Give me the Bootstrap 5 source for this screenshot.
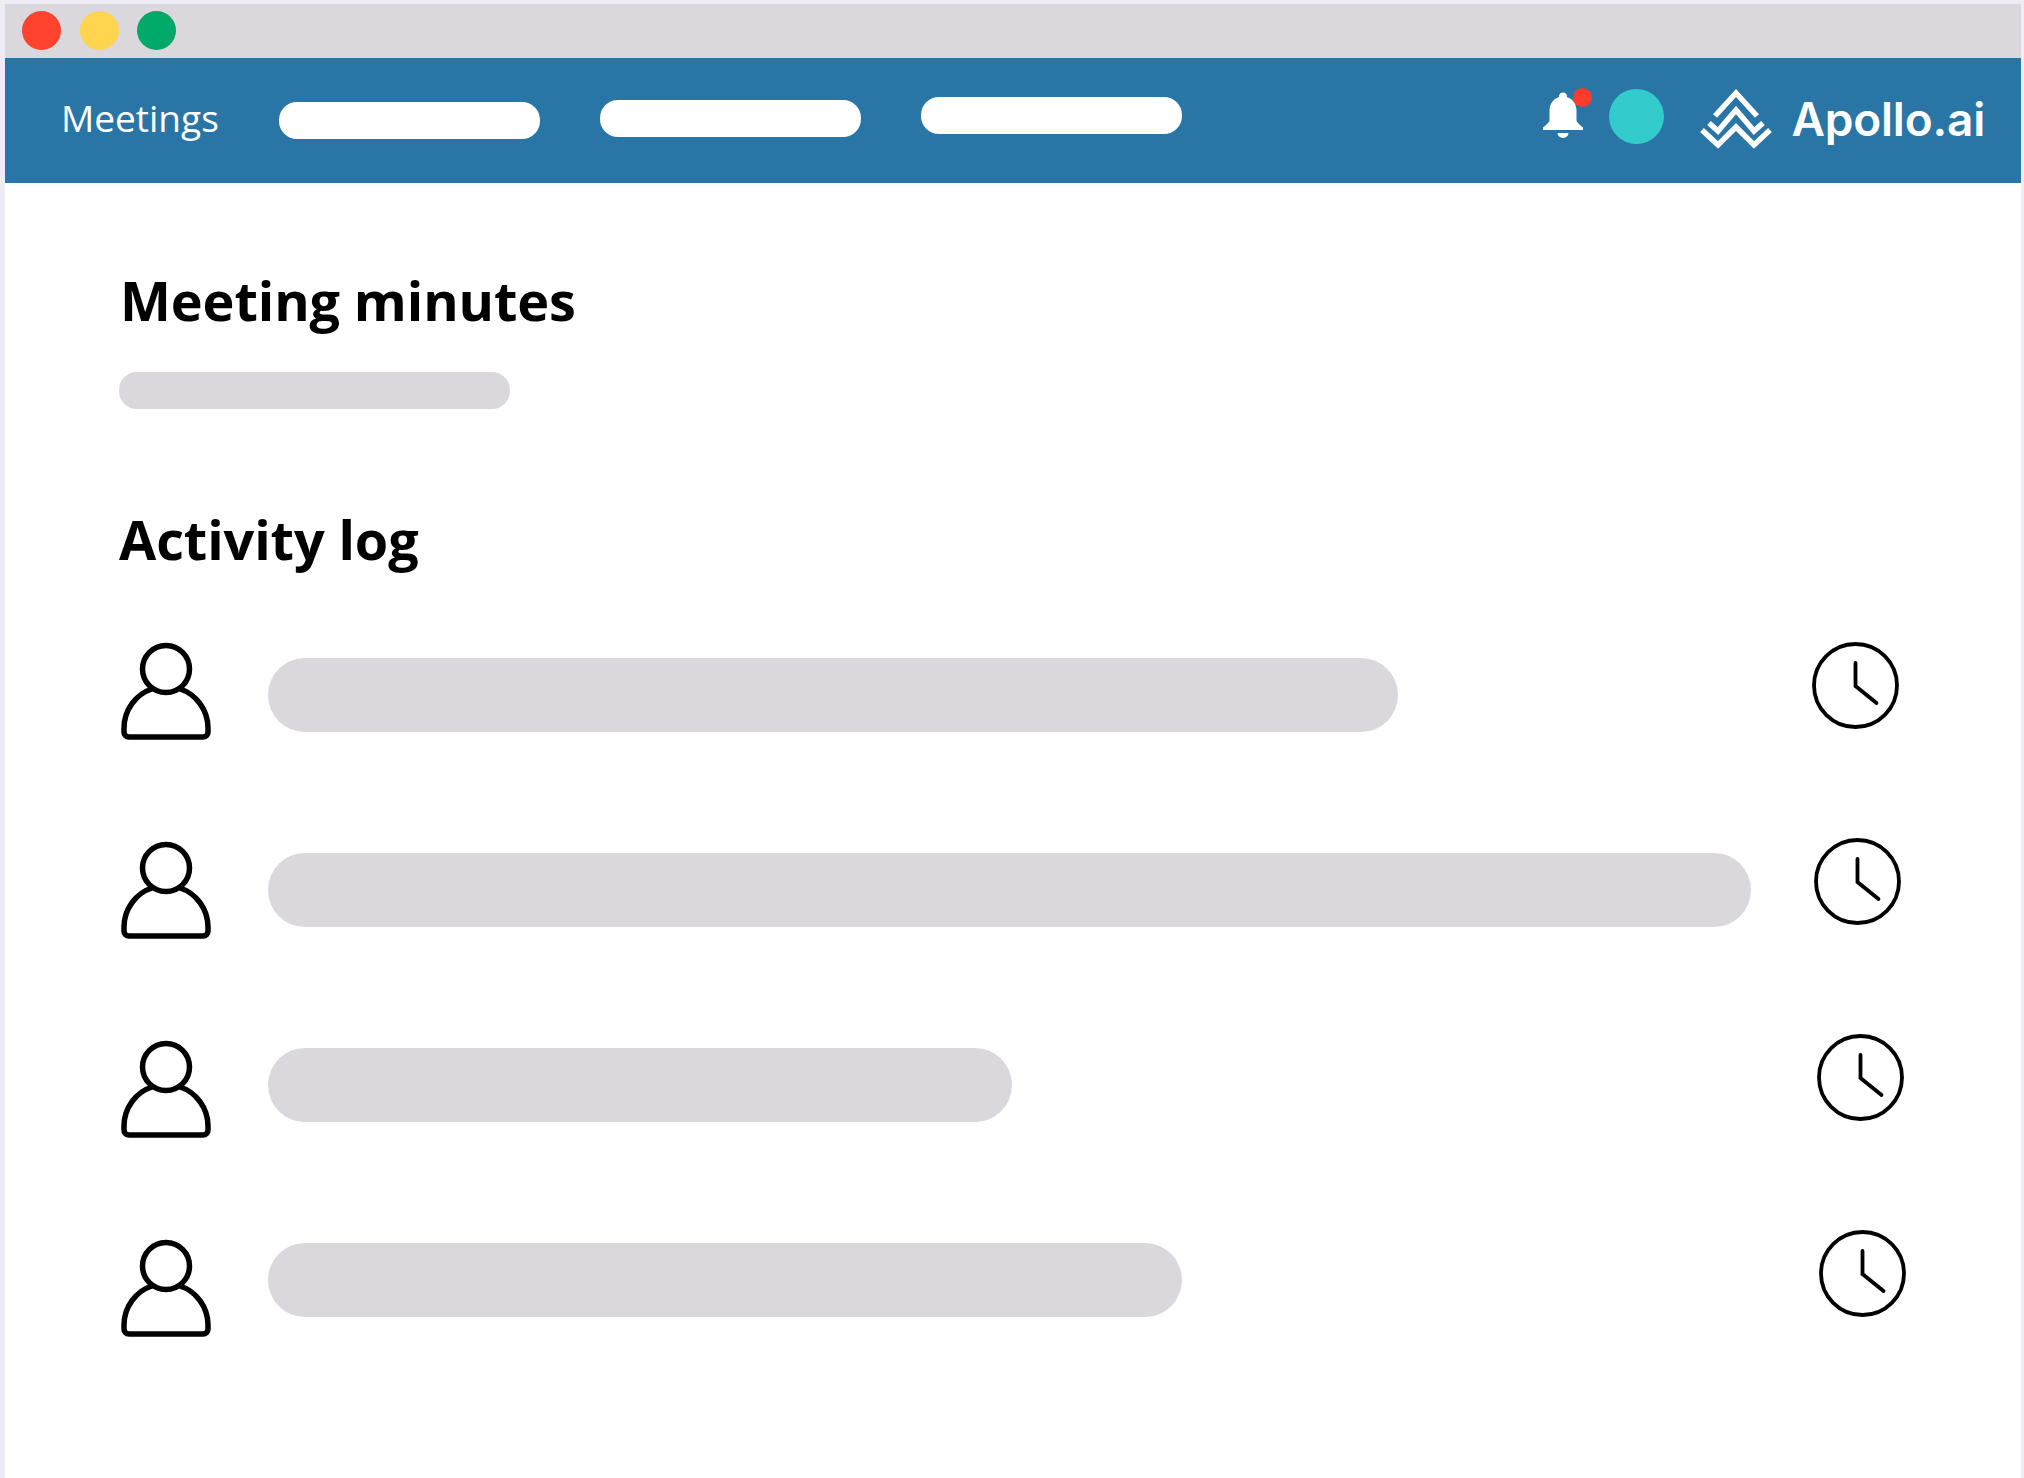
<!DOCTYPE html>
<html lang="en">
<head>
<meta charset="utf-8">
<title>Meetings</title>
<link href="https://cdn.jsdelivr.net/npm/bootstrap@5.3.0/dist/css/bootstrap.min.css" rel="stylesheet">
<style>
html,body{height:100%}
body{background:#eeedf6;padding:4px 3px 0 5px;font-family:"Open Sans","Noto Sans",sans-serif;overflow:hidden}
.app-window{background:#fff;min-height:100%}
.title-strip{background:#dad8dc;height:54px;padding-left:17px;gap:18.5px}
.tl-dot{width:39px;height:39px;border-radius:50%;margin-top:7px}
.tl-red{background:#ff432e}.tl-yellow{background:#ffd54f}.tl-green{background:#00a968}
.top-nav{background:#2975a5;height:125px;padding:0 36px 0 56px}
.nav-title{font-size:37px;font-weight:500;line-height:1;color:#fff;margin:0;padding-bottom:6px}
.nav-pill{width:261px;height:37px;background:#fff;border-radius:18px}
.np1{margin-left:60px}
.np2{margin-left:60px;margin-top:-4px}
.np3{margin-left:60px;margin-top:-10px}
.bell-wrap{position:relative;width:52px;height:48px;margin-right:14px;margin-top:-9px}
.bell-dot{position:absolute;left:30px;top:-4px;width:19px;height:19px;border-radius:50%;background:#ff3b2b}
.teal-dot{width:55px;height:55px;border-radius:50%;background:#33cccc;margin-right:35px;margin-top:-9px}
.mark-svg{margin-top:-4px}
.brand-name{font-family:Inter,"Liberation Sans",sans-serif;font-weight:600;font-size:46px;letter-spacing:-.2px;color:#fff;line-height:1;margin-left:18px;margin-top:-4px}
.page-body{padding:90px 0 0 114px}
.head-one,.head-two{font-weight:700;font-size:54px;letter-spacing:-.1px;line-height:1;color:#000;margin:0}
.head-one{padding-left:1px}
.ghost-bar{width:391px;height:37px;background:#dad8dc;border-radius:18px;margin-top:45px}
.head-two{margin-top:103px}
.log-grid{margin-top:76px}
.people-col{gap:99px;width:149px}
.person-svg{display:block;width:94px;height:100px}
.bars-col{gap:121px;padding-top:16px;width:1544px}
.log-bar{height:74px;background:#dad8dc;border-radius:37px}
.b1{width:1130px}.b2{width:1483px}.b3{width:744px}.b4{width:914px}
.clocks-col{gap:109px}
.clock-svg{display:block;width:87px;height:87px}
.c2{margin-left:2px}.c3{margin-left:5px}.c4{margin-left:7px}
</style>
</head>
<body>
<div class="app-window">
  <div class="title-strip d-flex align-items-start">
    <span class="tl-dot tl-red"></span><span class="tl-dot tl-yellow"></span><span class="tl-dot tl-green"></span>
  </div>
  <nav class="top-nav d-flex align-items-center">
    <p class="nav-title">Meetings</p>
    <span class="nav-pill np1"></span><span class="nav-pill np2"></span><span class="nav-pill np3"></span>
    <div class="ms-auto d-flex align-items-center">
      <div class="bell-wrap">
        <svg width="40" height="48" viewBox="0 0 40 48" class="d-block"><path fill="#fff" d="M20 .5a4 4 0 0 1 4 4.500c6 2 9.500 7 9.500 14v9c0 2 3 5 6.500 7.500v2.500H0v-2.500c3.500-2.500 6.500-5.500 6.500-7.500v-9c0-7 3.500-12 9.500-14a4 4 0 0 1 4-4.500ZM14.500 41h11a5.500 5 0 0 1-11 0Z"/></svg>
        <span class="bell-dot"></span>
      </div>
      <span class="teal-dot"></span>
      <div class="d-flex align-items-center">
        <svg class="mark-svg" width="74" height="62" viewBox="0 0 74 62" fill="none" stroke="#fff" stroke-width="5.500"><path d="M16 28 37 5l21 23"/><path d="m10 35 9 8 18-21 18 21 9-8"/><path d="m3 42 16 15 18-18 18 18 16-15"/></svg>
        <span class="brand-name">Apollo.ai</span>
      </div>
    </div>
  </nav>
  <main class="page-body">
    <h1 class="head-one">Meeting minutes</h1>
    <div class="ghost-bar"></div>
    <h2 class="head-two">Activity log</h2>
    <div class="log-grid d-flex align-items-start">
      <div class="people-col d-flex flex-column">
        <svg class="person-svg" viewBox="0 0 94 100" fill="none" stroke="#000" stroke-width="5.500"><circle cx="47" cy="27" r="23.500"/><path d="M33 47C17 52 5 68 5 86v4c0 3 2 5 5 5h74c3 0 5-2 5-5v-4c0-18-12-34-28-39"/></svg>
        <svg class="person-svg" viewBox="0 0 94 100" fill="none" stroke="#000" stroke-width="5.500"><circle cx="47" cy="27" r="23.500"/><path d="M33 47C17 52 5 68 5 86v4c0 3 2 5 5 5h74c3 0 5-2 5-5v-4c0-18-12-34-28-39"/></svg>
        <svg class="person-svg" viewBox="0 0 94 100" fill="none" stroke="#000" stroke-width="5.500"><circle cx="47" cy="27" r="23.500"/><path d="M33 47C17 52 5 68 5 86v4c0 3 2 5 5 5h74c3 0 5-2 5-5v-4c0-18-12-34-28-39"/></svg>
        <svg class="person-svg" viewBox="0 0 94 100" fill="none" stroke="#000" stroke-width="5.500"><circle cx="47" cy="27" r="23.500"/><path d="M33 47C17 52 5 68 5 86v4c0 3 2 5 5 5h74c3 0 5-2 5-5v-4c0-18-12-34-28-39"/></svg>
      </div>
      <div class="bars-col d-flex flex-column">
        <div class="log-bar b1"></div><div class="log-bar b2"></div><div class="log-bar b3"></div><div class="log-bar b4"></div>
      </div>
      <div class="clocks-col d-flex flex-column">
        <svg class="clock-svg" viewBox="0 0 87 87" fill="none" stroke="#000" stroke-width="3.800" stroke-linecap="round"><circle cx="43.500" cy="43.500" r="41.500"/><path d="M43.500 21v23l21 17"/></svg>
        <svg class="clock-svg c2" viewBox="0 0 87 87" fill="none" stroke="#000" stroke-width="3.800" stroke-linecap="round"><circle cx="43.500" cy="43.500" r="41.500"/><path d="M43.500 21v23l21 17"/></svg>
        <svg class="clock-svg c3" viewBox="0 0 87 87" fill="none" stroke="#000" stroke-width="3.800" stroke-linecap="round"><circle cx="43.500" cy="43.500" r="41.500"/><path d="M43.500 21v23l21 17"/></svg>
        <svg class="clock-svg c4" viewBox="0 0 87 87" fill="none" stroke="#000" stroke-width="3.800" stroke-linecap="round"><circle cx="43.500" cy="43.500" r="41.500"/><path d="M43.500 21v23l21 17"/></svg>
      </div>
    </div>
  </main>
</div>
<script src="https://cdn.jsdelivr.net/npm/bootstrap@5.3.0/dist/js/bootstrap.bundle.min.js"></script>
</body>
</html>
